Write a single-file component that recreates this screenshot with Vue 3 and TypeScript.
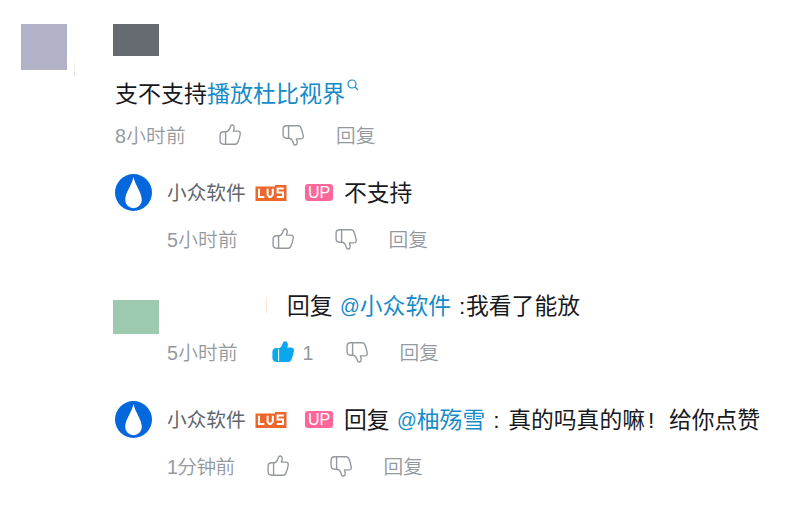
<template>
    <div class="comments">
        <div class="avatar-block"></div>
        <div class="edge-mark"></div>
        <div class="main">
            <div class="user-block"></div>
            <div class="content">
                <span>支不支持</span><a class="link">播放杜比视界</a>
                <svg class="search" viewBox="0 0 12 12">
                    <circle cx="5" cy="5" r="4" />
                    <path d="M8 8l3 3" />
                </svg>
            </div>
            <div class="meta root-meta">
                <span class="time">8小时前</span>
                <svg class="icon" viewBox="0 0 22 22"><path :d="thumb" /><path :d="cuff" /></svg>
                <svg class="icon down" viewBox="0 0 22 22"><path :d="thumb" /><path :d="cuff" /></svg>
                <span class="reply-btn">回复</span>
            </div>

            <div v-for="reply in replies" :key="reply.id" class="reply" :class="'reply-' + reply.id">
                <div v-if="reply.name" class="avatar">
                    <svg viewBox="0 0 37 37">
                        <circle cx="18.5" cy="18.5" r="18.5" fill="#0468dc" />
                        <path d="M18.5 3C17 11 10.2 18.5 10.2 26a8.3 8.3 0 0 0 16.6 0C26.8 18.5 20 11 18.5 3z" fill="#fff" />
                    </svg>
                </div>
                <div v-else class="green-block"></div>
                <div class="body">
                    <div class="line">
                        <template v-if="reply.name">
                            <span class="name">{{ reply.name }}</span>
                            <span class="level">
                                <svg viewBox="0 0 32 16" width="32" height="16">
                                    <path class="plate" d="M0.5 1.5H20V0H31.5V16H0.5Z" />
                                    <path d="M4 3.8V12H9.4M12.6 3.8V9.8L14.4 12H15.6L17.8 9.8V3.8M28.8 3.6H22.6V7.6H28V12H21.8" />
                                </svg>
                            </span>
                            <span class="up">UP</span>
                        </template>
                        <span v-else class="divider"></span>
                        <span v-if="reply.to" class="prefix">回复</span>
                        <a v-if="reply.to" class="link mention"><span class="at">@</span>{{ reply.to }}</a>
                        <span class="text"><i v-if="reply.to" class="colon">:</i>{{ reply.text }}<template v-if="reply.tail"><i class="bang">!</i>{{ reply.tail }}</template></span>
                    </div>
                    <div class="meta">
                        <span class="time">{{ reply.time }}</span>
                        <svg class="icon" :class="{ liked: reply.likes }" viewBox="0 0 22 22"><path :d="thumb" /><path :d="cuff" /></svg>
                        <span v-if="reply.likes" class="count">{{ reply.likes }}</span>
                        <svg class="icon down" viewBox="0 0 22 22"><path :d="thumb" /><path :d="cuff" /></svg>
                        <span class="reply-btn">回复</span>
                    </div>
                </div>
            </div>
        </div>
    </div>
</template>

<script setup lang="ts">
interface Reply {
    id: number
    name?: string
    to?: string
    text: string
    tail?: string
    time: string
    likes?: number
}

const thumb = 'M4.6 7.8H7.2C9 7.6 10.6 5.4 11.3 2.8C12 .2 15.2 .5 15.2 3.4C15.2 4.8 14.8 6 14.4 7.1H18.8C20.6 7.1 21.5 8.2 21.2 10C20.8 13.2 19.9 16 18.8 18.4C18.2 19.7 17.4 20.2 16.2 20.2H4.6C2.2 20.2 1.1 19 1.1 16.8V11.2C1.1 9 2.2 7.8 4.6 7.8Z'
const cuff = 'M6.6 7.9V20.1'

const replies: Reply[] = [
    { id: 1, name: '小众软件', text: '不支持', time: '5小时前' },
    { id: 2, to: '小众软件', text: '我看了能放', time: '5小时前', likes: 1 },
    { id: 3, name: '小众软件', to: '柚殇雪', text: '真的吗真的嘛', tail: '给你点赞', time: '1分钟前' },
]
</script>

<style>
body {
    background: #fff;
}
</style>

<style scoped>
.comments {
    display: flex;
    box-sizing: border-box;
    width: 800px;
    height: 513px;
    padding: 24px 0 0 21px;
    overflow: hidden;
    font-family: "Liberation Sans", "Noto Sans CJK SC", sans-serif;
    font-size: 22.8px;
    color: #18191c;
    white-space: nowrap;
}

.avatar-block {
    width: 46px;
    height: 46px;
    background: #b1b1c7;
}

.edge-mark {
    width: 1px;
    height: 30px;
    margin: 22px 38px 0 7px;
    background: linear-gradient(#fff, #f5f3f1 80%, #ddd);
}

.user-block {
    width: 46px;
    height: 32px;
    background: #666a71;
}

.content {
    display: flex;
    height: 32px;
    margin: 22px 0 0 2px;
    font-size: 23px;
    line-height: 32px;
}

.link {
    color: #178bc8;
}

.search {
    width: 12px;
    height: 12px;
    margin: 1px 0 0 2px;
    fill: none;
    stroke: #178bc8;
    stroke-width: 1.2;
}

.meta {
    display: flex;
    align-items: center;
    height: 24px;
    font-size: 19.7px;
    font-weight: 350;
    line-height: 24px;
    color: #9499a0;
}

.meta span {
    padding-top: 1px;
}

.root-meta {
    margin: 13px 0 0 2px;
}

.time {
    width: 71px;
    margin-right: 33px;
    letter-spacing: 0.2px;
}

.icon {
    width: 22px;
    height: 22px;
    fill: none;
    stroke: #9499a0;
    stroke-width: 1.4;
    stroke-linejoin: round;
}

.down {
    margin: 0 32px 0 41px;
    transform: scaleY(-1);
}

.liked {
    fill: #0aa7ec;
    stroke: #0aa7ec;
}

.liked path + path {
    stroke: #fff;
    stroke-width: 1;
}

.count {
    width: 11px;
    margin-left: 9px;
}

.count + .down {
    margin-left: 32px;
}

.reply {
    display: flex;
}

.reply-1 {
    margin-top: 27px;
}

.reply-2 {
    margin-top: 36px;
}

.reply-3 {
    margin-top: 37px;
}

.reply .time {
    margin-right: 33.5px;
}

.avatar {
    width: 37px;
    height: 37px;
    margin: 0 15px 0 2px;
}

.avatar svg {
    display: block;
}

.green-block {
    width: 46px;
    height: 34px;
    margin: 13px 8px 0 0;
    background: #9dcaae;
}

.line {
    display: flex;
    align-items: center;
    height: 37px;
    margin-bottom: 16px;
    line-height: 37px;
}

.name {
    width: 80px;
    padding-top: 1px;
    font-size: 19.7px;
    color: #61666d;
}

.level {
    width: 32px;
    height: 16px;
    margin: 1px 18px 0 8px;
}

.level svg {
    display: block;
    fill: none;
    stroke: #fff;
    stroke-width: 2;
}

.level .plate {
    fill: #ec672c;
    stroke: none;
}

.up {
    width: 28px;
    height: 17px;
    margin-right: 11px;
    border-radius: 3px;
    background: #ff6699;
    color: #fff;
    font-size: 16px;
    line-height: 18px;
    text-align: center;
}

.divider {
    width: 1px;
    height: 15px;
    margin: 0 20px 0 99px;
    background: #fbe3cf;
}

.text,
.mention,
.prefix {
    padding-top: 1px;
}

.prefix {
    width: 45px;
    margin-right: 8px;
}

.at {
    font-size: 19.5px;
    vertical-align: 1px;
}

.colon {
    display: inline-block;
    width: 7px;
    margin-left: 8px;
    font-style: normal;
}

.bang {
    display: inline-block;
    width: 24px;
    padding-left: 3px;
    box-sizing: border-box;
    font-style: normal;
}

.reply-3 .colon {
    width: 15px;
}

.reply-3 .time {
    width: 67px;
    margin-right: 32.5px;
    letter-spacing: -0.6px;
}
</style>
